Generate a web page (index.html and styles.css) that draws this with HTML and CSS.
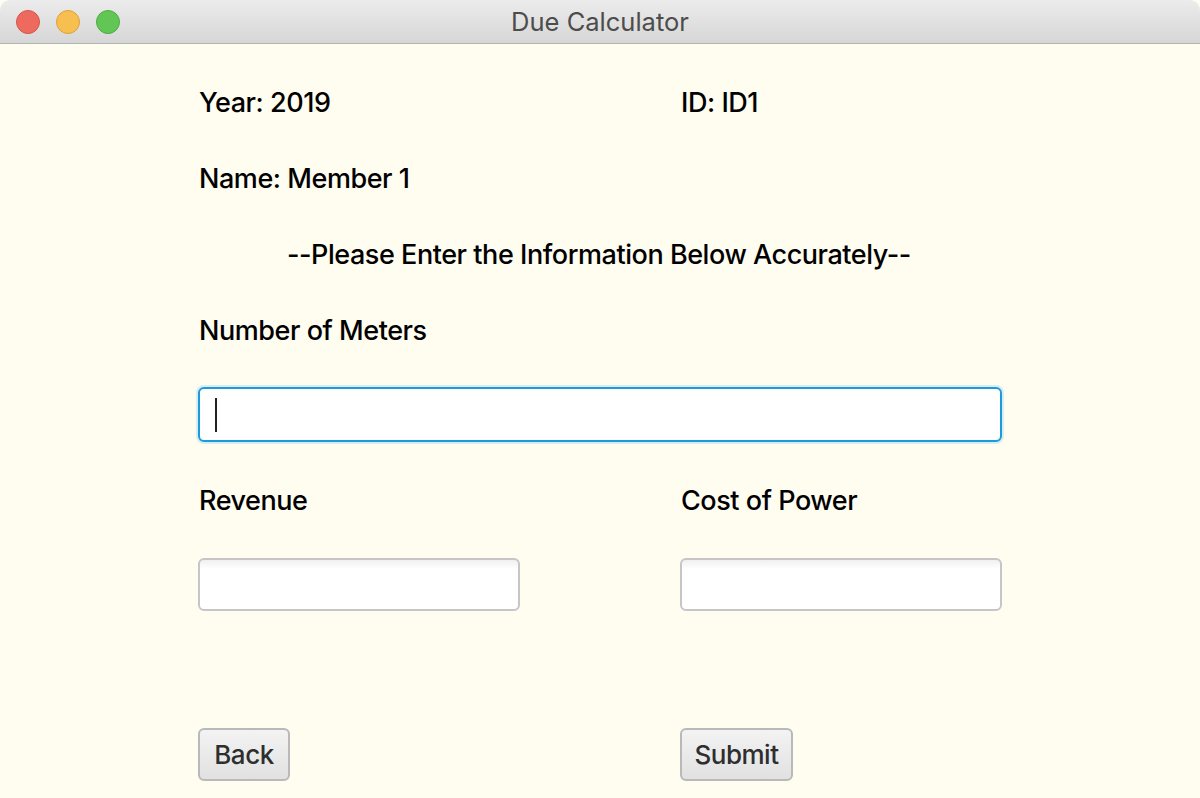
FILE: index.html
```html
<!DOCTYPE html>
<html>
<head>
<meta charset="utf-8">
<title>Due Calculator</title>
<link rel="stylesheet" href="styles.css">
</head>
<body>
<div class="window">
  <div class="titlebar">
    <div class="lights">
      <span class="light red"></span>
      <span class="light yellow"></span>
      <span class="light green"></span>
    </div>
    <div class="title">Due Calculator</div>
  </div>
  <div class="content">
    <div class="grid row-text">
      <div class="label">Year: 2019</div>
      <div class="label">ID: ID1</div>
    </div>
    <div class="row-text label">Name: Member 1</div>
    <div class="row-text label notice">--Please Enter the Information Below Accurately--</div>
    <div class="row-text label">Number of Meters</div>
    <div class="field wide focused"><span class="caret"></span></div>
    <div class="grid row-text pair">
      <div class="label">Revenue</div>
      <div class="label">Cost of Power</div>
    </div>
    <div class="grid">
      <div class="field small"></div>
      <div class="field small"></div>
    </div>
    <div class="grid buttons">
      <div><button class="btn btn-back">Back</button></div>
      <div><button class="btn btn-submit">Submit</button></div>
    </div>
  </div>
</div>
</body>
</html>
```
FILE: styles.css
```css
html, body {
  margin: 0;
  padding: 0;
  width: 1200px;
  height: 798px;
  overflow: hidden;
  background: #fffdf0;
}
.window {
  width: 1200px;
  height: 798px;
  display: flex;
  flex-direction: column;
  background: #fffcf0;
  font-family: Inter, "Liberation Sans", sans-serif;
}
.titlebar {
  height: 43px;
  border-bottom: 1px solid #b4b4b4;
  background: linear-gradient(#ececec, #d6d6d6);
  border-top-left-radius: 10px;
  border-top-right-radius: 10px;
  display: flex;
  align-items: center;
  position: relative;
  flex-shrink: 0;
}
.lights {
  display: flex;
  gap: 16px;
  padding-left: 16px;
}
.light {
  width: 22px;
  height: 22px;
  border-radius: 50%;
  display: block;
}
.red { background: #ee6a5f; border: 1px solid #d5554a; }
.yellow { background: #f6bf4f; border: 1px solid #dba23c; }
.green { background: #62c655; border: 1px solid #4fab42; }
.title {
  position: absolute;
  left: 0;
  right: 0;
  top: 0;
  bottom: 0;
  display: flex;
  align-items: center;
  justify-content: center;
  font-size: 25.5px;
  color: #4c4c4c;
}
.content {
  display: flex;
  flex-direction: column;
  padding: 40px 0 0 198px;
  gap: 38px;
}
.grid {
  display: grid;
  grid-template-columns: 482px 322px;
}
.row-text {
  height: 38px;
  line-height: 38px;
}
.label {
  font-size: 27px;
  font-weight: 500;
  color: #000;
  padding-left: 1px;
  letter-spacing: -0.45px;
  white-space: nowrap;
}
.notice {
  padding-left: 89px;
}
.pair {
  margin-top: 2px;
}
.field {
  box-sizing: border-box;
  height: 53px;
  background: linear-gradient(#f0f0f0, #ffffff 9px, #ffffff);
  border: 2px solid #c6c6c6;
  border-radius: 6px;
}
.small {
  width: 322px;
}
.wide {
  width: 804px;
  height: 55px;
  margin-top: -1px;
  position: relative;
}
.focused {
  border: 2px solid #1d9bd8;
  box-shadow: 0 0 0 2px #d6edf6;
  background: #ffffff;
}
.caret {
  position: absolute;
  left: 15px;
  top: 9px;
  width: 2px;
  height: 34px;
  background: #222;
}
.buttons {
  margin-top: 79px;
}
.btn {
  box-sizing: border-box;
  height: 53px;
  padding: 0;
  font-family: Inter, "Liberation Sans", sans-serif;
  font-size: 26px;
  font-weight: 500;
  letter-spacing: -0.5px;
  color: #2e2e2e;
  background: linear-gradient(#f3f3f3, #e1e1e1);
  border: 2px solid #b9b9b9;
  border-radius: 6px;
}
.btn-back { width: 92px; }
.btn-submit { width: 113px; }
```
